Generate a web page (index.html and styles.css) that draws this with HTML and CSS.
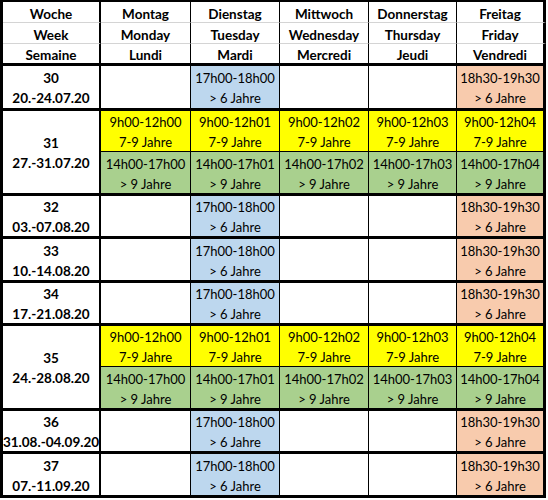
FILE: index.html
```html
<!DOCTYPE html>
<html lang="de">
<head>
<meta charset="utf-8">
<title>Stundenplan</title>
<link rel="stylesheet" href="styles.css">
</head>
<body>
<div class="sheet">
  <div class="c h hl first">Woche</div>
  <div class="c h hl">Montag</div>
  <div class="c h hl">Dienstag</div>
  <div class="c h hl">Mittwoch</div>
  <div class="c h hl">Donnerstag</div>
  <div class="c h hl last">Freitag</div>

  <div class="c h hl first">Week</div>
  <div class="c h hl">Monday</div>
  <div class="c h hl">Tuesday</div>
  <div class="c h hl">Wednesday</div>
  <div class="c h hl">Thursday</div>
  <div class="c h hl last">Friday</div>

  <div class="c h hb first">Semaine</div>
  <div class="c h hb">Lundi</div>
  <div class="c h hb">Mardi</div>
  <div class="c h hb">Mercredi</div>
  <div class="c h hb">Jeudi</div>
  <div class="c h hb last">Vendredi</div>

  <!-- 30 -->
  <div class="c wk first"><span>30</span><span>20.-24.07.20</span></div>
  <div class="c"></div>
  <div class="c blue"><span>17h00-18h00</span><span>&gt; 6 Jahre</span></div>
  <div class="c"></div>
  <div class="c"></div>
  <div class="c salmon last"><span>18h30-19h30</span><span>&gt; 6 Jahre</span></div>

  <!-- 31 -->
  <div class="c wk first span2"><span>31</span><span>27.-31.07.20</span></div>
  <div class="c yellow thin"><span>9h00-12h00</span><span>7-9 Jahre</span></div>
  <div class="c yellow thin"><span>9h00-12h01</span><span>7-9 Jahre</span></div>
  <div class="c yellow thin"><span>9h00-12h02</span><span>7-9 Jahre</span></div>
  <div class="c yellow thin"><span>9h00-12h03</span><span>7-9 Jahre</span></div>
  <div class="c yellow thin last"><span>9h00-12h04</span><span>7-9 Jahre</span></div>
  <div class="c green"><span>14h00-17h00</span><span>&gt; 9 Jahre</span></div>
  <div class="c green"><span>14h00-17h01</span><span>&gt; 9 Jahre</span></div>
  <div class="c green"><span>14h00-17h02</span><span>&gt; 9 Jahre</span></div>
  <div class="c green"><span>14h00-17h03</span><span>&gt; 9 Jahre</span></div>
  <div class="c green last"><span>14h00-17h04</span><span>&gt; 9 Jahre</span></div>

  <!-- 32 -->
  <div class="c wk first"><span>32</span><span>03.-07.08.20</span></div>
  <div class="c"></div>
  <div class="c blue"><span>17h00-18h00</span><span>&gt; 6 Jahre</span></div>
  <div class="c"></div>
  <div class="c"></div>
  <div class="c salmon last"><span>18h30-19h30</span><span>&gt; 6 Jahre</span></div>

  <!-- 33 -->
  <div class="c wk first"><span>33</span><span>10.-14.08.20</span></div>
  <div class="c"></div>
  <div class="c blue"><span>17h00-18h00</span><span>&gt; 6 Jahre</span></div>
  <div class="c"></div>
  <div class="c"></div>
  <div class="c salmon last"><span>18h30-19h30</span><span>&gt; 6 Jahre</span></div>

  <!-- 34 -->
  <div class="c wk first"><span>34</span><span>17.-21.08.20</span></div>
  <div class="c"></div>
  <div class="c blue"><span>17h00-18h00</span><span>&gt; 6 Jahre</span></div>
  <div class="c"></div>
  <div class="c"></div>
  <div class="c salmon last"><span>18h30-19h30</span><span>&gt; 6 Jahre</span></div>

  <!-- 35 -->
  <div class="c wk first span2"><span>35</span><span>24.-28.08.20</span></div>
  <div class="c yellow thin"><span>9h00-12h00</span><span>7-9 Jahre</span></div>
  <div class="c yellow thin"><span>9h00-12h01</span><span>7-9 Jahre</span></div>
  <div class="c yellow thin"><span>9h00-12h02</span><span>7-9 Jahre</span></div>
  <div class="c yellow thin"><span>9h00-12h03</span><span>7-9 Jahre</span></div>
  <div class="c yellow thin last"><span>9h00-12h04</span><span>7-9 Jahre</span></div>
  <div class="c green"><span>14h00-17h00</span><span>&gt; 9 Jahre</span></div>
  <div class="c green"><span>14h00-17h01</span><span>&gt; 9 Jahre</span></div>
  <div class="c green"><span>14h00-17h02</span><span>&gt; 9 Jahre</span></div>
  <div class="c green"><span>14h00-17h03</span><span>&gt; 9 Jahre</span></div>
  <div class="c green last"><span>14h00-17h04</span><span>&gt; 9 Jahre</span></div>

  <!-- 36 -->
  <div class="c wk first"><span>36</span><span>31.08.-04.09.20</span></div>
  <div class="c"></div>
  <div class="c blue"><span>17h00-18h00</span><span>&gt; 6 Jahre</span></div>
  <div class="c"></div>
  <div class="c"></div>
  <div class="c salmon last"><span>18h30-19h30</span><span>&gt; 6 Jahre</span></div>

  <!-- 37 -->
  <div class="c wk first"><span>37</span><span>07.-11.09.20</span></div>
  <div class="c"></div>
  <div class="c blue"><span>17h00-18h00</span><span>&gt; 6 Jahre</span></div>
  <div class="c"></div>
  <div class="c"></div>
  <div class="c salmon last"><span>18h30-19h30</span><span>&gt; 6 Jahre</span></div>
</div>
</body>
</html>
```

FILE: styles.css
```css
html, body {
  margin: 0;
  padding: 0;
  background: #ffffff;
}

body {
  font-family: Lato, "Open Sans", sans-serif;
  font-size: 13px;
  color: #000000;
}

.sheet {
  display: grid;
  width: 546px;
  box-sizing: border-box;
  border-left: 3px solid #000;
  border-top: 2px solid #000;
  grid-template-columns: 98px 90px 89px 89px 88px 89px;
  grid-template-rows: 21px 21px 22px 45px 41px 44px 43px 44px 43px 41px 44px 43px 44px;
}

.c {
  box-sizing: border-box;
  display: flex;
  flex-direction: column;
  align-items: center;
  justify-content: center;
  text-align: center;
  line-height: 20px;
  border-right: 1px solid #000;
  border-bottom: 3px solid #000;
  padding-top: 2px;
  white-space: nowrap;
}

.c.first {
  border-right-width: 2px;
}

.c.last {
  border-right-width: 3px;
}

.c.h {
  font-weight: 700;
  font-size: 13.5px;
  padding-top: 3px;
}

.c.hl {
  border-bottom: 1px solid #d4d4d4;
}

.c.hb {
  border-bottom: 3px solid #000;
}

.c.wk {
  font-weight: 700;
  font-size: 13.5px;
}

.c.span2 {
  grid-row: span 2;
}

.c.thin {
  border-bottom-width: 1px;
}

.blue {
  background: #bdd7ee;
}

.salmon {
  background: #f8cbad;
}

.yellow {
  background: #ffff00;
}

.green {
  background: #a9d08e;
}
```
